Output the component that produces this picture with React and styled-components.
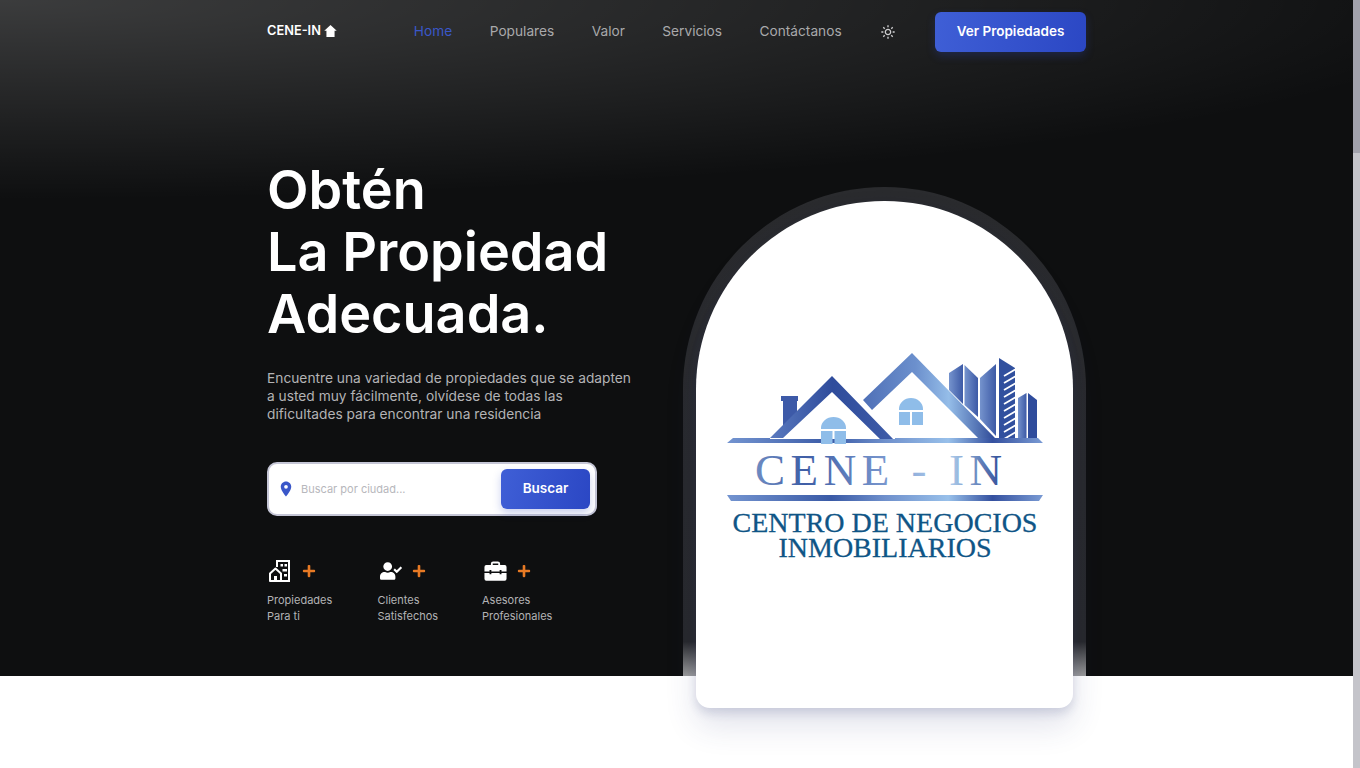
import React from 'react'
import styled, { createGlobalStyle } from 'styled-components'
import { FaUserCheck, FaPlus } from 'react-icons/fa'
import { BiSun } from 'react-icons/bi'
import { MdLocationOn } from 'react-icons/md'

const GlobalStyle = createGlobalStyle`
    body {
        margin: 0;
        background: #fff;
        font-family: 'Inter', 'Open Sans', sans-serif;
    }
`;

const Page = styled.div`
    height: 768px;
    display: flex;
    overflow: hidden;
`;

const Main = styled.main`
    flex: 1;
`;

const ScrollTrack = styled.div`
    width: 7px;
    background: #c4c4ca;
`;

const ScrollThumb = styled.div`
    height: 153px;
    background: #a2a2ac;
`;

const Hero = styled.section`
    height: 676px;
    background: radial-gradient(ellipse 1500px 200px at 0 0, rgba(255, 255, 255, 0.19), transparent), #0e0f10;
`;

const Wrapper = styled.div`
    width: 819px;
    margin: 0 auto;
`;

const Nav = styled.nav`
    height: 63px;
    display: flex;
    align-items: center;
    justify-content: space-between;
`;

const Logo = styled.a`
    display: flex;
    align-items: center;
    gap: 3px;
    padding-bottom: 2px;
    color: #fff;
    font-size: 12.8px;
    font-weight: 600;
`;

const Menu = styled.div`
    display: flex;
    align-items: center;
    gap: 37.5px;
    margin-left: 77px;
    padding-bottom: 2px;
`;

const MenuLink = styled.a`
    font-size: 13.7px;
    color: ${props => props.active ? '#3a57c9' : '#a9a9ab'};
`;

const ThemeIcon = styled.span`
    display: flex;
    color: #d0d0d2;
    font-size: 16px;
    margin: 0 39px 0 auto;
`;

const Button = styled.button`
    border: 0;
    border-radius: 6px;
    padding: 0 0 2px;
    color: #fff;
    font-family: inherit;
    font-size: 13.5px;
    font-weight: 600;
    background: linear-gradient(101deg, #3f5fd6, #2b47c4);
    box-shadow: 0 4px 8px rgba(44, 70, 190, 0.25);
    width: ${props => props.wide ? '151px' : '89px'};
    height: 40px;
`;

const Content = styled.div`
    display: flex;
    justify-content: space-between;
`;

const Left = styled.div`
    padding-top: 96px;
`;

const Title = styled.h1`
    margin: 0 0 24px;
    color: #fff;
    font-size: 54px;
    line-height: 62px;
    font-weight: 600;
`;

const Description = styled.p`
    margin: 0 0 39px;
    width: 370px;
    color: #b3b3b5;
    font-size: 13.75px;
    line-height: 18px;
`;

const Search = styled.form`
    width: 330px;
    height: 54px;
    box-sizing: border-box;
    display: flex;
    align-items: center;
    padding: 0 5px 0 8px;
    gap: 6px;
    background: #fff;
    border: 2px solid #c5c6d6;
    border-radius: 10px;
    margin-bottom: 41px;
`;

const PinIcon = styled.span`
    display: flex;
    color: #3a57c9;
    font-size: 18px;
`;

const Placeholder = styled.span`
    flex: 1;
    color: #b7b7bc;
    font-size: 11px;
`;

const Stats = styled.div`
    display: flex;
`;

const Stat = styled.div`
    width: ${props => props.width}px;
`;

const StatTop = styled.div`
    display: flex;
    align-items: center;
    gap: 10px;
    height: 28px;
    margin-bottom: 7px;
    color: #fff;
`;

const StatIcon = styled.span`
    display: flex;
    margin-left: ${props => props.offset}px;
`;

const Plus = styled.span`
    display: flex;
    color: #e87a24;
    font-size: 14px;
`;

const StatLabel = styled.div`
    color: #b3b3b5;
    font-size: 11px;
    line-height: 16px;
`;

const Orbe = styled.div`
    margin-top: 124px;
    width: 403px;
    height: 489px;
    box-sizing: border-box;
    padding: 14px 13px 0;
    border-radius: 202px 202px 0 0;
    background: linear-gradient(180deg, #2a2b2e 0%, #27282b 93%, #9a9a9a 100%);
`;

const Card = styled.div`
    height: 507px;
    background: #fff;
    border-radius: 188px 188px 14px 14px;
    box-shadow: 0 18px 32px rgba(50, 60, 120, 0.14), 0 5px 10px rgba(50, 60, 120, 0.16);
    display: flex;
    justify-content: center;
    padding-top: 139px;
    box-sizing: border-box;
`;

const LogoArt = styled.svg`
    display: block;
    width: 331px;
    height: 230px;
`;

function HomeIcon() {
    return (
        <svg width="13" height="14" viewBox="0 0 24 24" fill="#fff">
            <path d="M12 1L0.500 11.500H4.500V23H19.500V11.500H23.500z" />
        </svg>
    )
}

function BuildingIcon() {
    return (
        <svg width="24" height="24" viewBox="0 0 24 24" fill="none" stroke="#fff" strokeWidth="2">
            <path d="M9 8V2h12v20H10" />
            <path d="M2 14.500L7.500 9.500 13 14.500V22H2z" strokeLinejoin="round" />
            <path fill="#fff" stroke="none" d="M12.500 5h2.500v2.500h-2.500zM16.500 5H19v2.500h-2.500zM14.500 10H19v2.500h-4.500zM16 15h3v2.500h-3zM6 17h3v5H6z" />
        </svg>
    )
}

function ToolboxIcon() {
    return (
        <svg width="23" height="23" viewBox="0 0 25 24" fill="#fff">
            <path fillRule="evenodd" d="M7.500 5V3.500A2.500 2.500 0 0 1 10 1h5a2.500 2.500 0 0 1 2.500 2.500V5H15.500V3.200h-6V5zM2.500 5h20A2 2 0 0 1 24.500 7v5H19v-1.500h-2V12H8v-1.500H6V12H.5V7a2 2 0 0 1 2-2zM.5 13.500H6v1.500h2V13.500h9v1.500h2V13.500h5.500V20a2 2 0 0 1-2 2h-20a2 2 0 0 1-2-2z" />
        </svg>
    )
}

// drawn in page coordinates so it can be read straight off the reference
function CeneLogo() {
    return (
        <LogoArt viewBox="719 340 331 230">
            <defs>
                <linearGradient id="roofLeft" gradientUnits="userSpaceOnUse" x1="770" y1="0" x2="895" y2="0">
                    <stop offset="0" stopColor="#5a7abf" />
                    <stop offset="0.5" stopColor="#2f4c9c" />
                    <stop offset="1" stopColor="#3e5ca8" />
                </linearGradient>
                <linearGradient id="roofRight" gradientUnits="userSpaceOnUse" x1="863" y1="0" x2="995" y2="0">
                    <stop offset="0" stopColor="#4f70b7" />
                    <stop offset="0.4" stopColor="#6c90cd" />
                    <stop offset="0.65" stopColor="#95bde8" />
                    <stop offset="1" stopColor="#2d4896" />
                </linearGradient>
                <linearGradient id="base" gradientUnits="userSpaceOnUse" x1="727" y1="0" x2="1043" y2="0">
                    <stop offset="0" stopColor="#7394d0" />
                    <stop offset="0.33" stopColor="#3a5aa6" />
                    <stop offset="0.5" stopColor="#6f90cc" />
                    <stop offset="0.7" stopColor="#98c0ea" />
                    <stop offset="0.84" stopColor="#34509f" />
                    <stop offset="1" stopColor="#7a9bd4" />
                </linearGradient>
                <linearGradient id="tower" x1="0" y1="0" x2="1" y2="0">
                    <stop offset="0" stopColor="#7593cd" />
                    <stop offset="1" stopColor="#3d5aa6" />
                </linearGradient>
                <linearGradient id="name" gradientUnits="userSpaceOnUse" x1="755" y1="0" x2="1002" y2="0">
                    <stop offset="0" stopColor="#6f8cc2" />
                    <stop offset="0.2" stopColor="#3f5ea6" />
                    <stop offset="0.55" stopColor="#7c9ad0" />
                    <stop offset="0.78" stopColor="#b3d2ef" />
                    <stop offset="1" stopColor="#2f4c97" />
                </linearGradient>
            </defs>
            {/* towers */}
            <path fill="url(#tower)" d="M949 373L963 364V404L949 390z" />
            <path fill="url(#tower)" d="M964.500 365L978 378V417L964.500 405z" />
            <path fill="url(#tower)" d="M980 378L996 364V436L980 419z" />
            <path fill="#31509e" d="M999 358L1015 368V438H999z" />
            <path stroke="#fff" strokeWidth="1.800" d="M1004 376L1016 369M1004 383L1016 376M1004 390L1016 383M1004 397L1016 390M1004 404L1016 397M1004 411L1016 404M1004 418L1016 411M1004 425L1016 418M1004 432L1016 425M1004 439L1016 432" />
            <path fill="url(#tower)" d="M1018 398L1026.500 393V438H1018z" />
            <path fill="#2f4c9c" d="M1028 393L1037 400V438H1028z" />
            {/* chimney */}
            <path fill="#3d5aa8" d="M781 396H798V401H797V414L783 428V401H781z" />
            {/* houses */}
            <path fill="url(#roofRight)" d="M863 400L912 353 995 438H978L912 372 872 410z" />
            <path fill="url(#roofLeft)" d="M770 438L832 376 895 441H882L832 392 783 438z" />
            <path fill="url(#base)" d="M727 443L733 438H770V439H895V438H1038L1043 443z" />
            {/* windows */}
            <path fill="#8fbde9" d="M821 428A12.500 11 0 0 1 846 428V429H821zM821 431H832.500V444H821zM834.500 431H846V444H834.500zM899 409A12 11 0 0 1 923 409V410H899zM899 412H910V425H899zM912 412H923V425H912z" />
            <text x="755" y="485" textLength="247" lengthAdjust="spacing" fontFamily="'Liberation Serif', serif" fontSize="45" fill="url(#name)">CENE - IN</text>
            <path fill="url(#base)" d="M727 495H1043L1039 501H731z" />
            <g fontFamily="'Liberation Serif', serif" fontSize="28" fill="#0f5586" stroke="#0f5586" strokeWidth="0.3" textAnchor="middle">
                <text x="885" y="532">CENTRO DE NEGOCIOS</text>
                <text x="885" y="557">INMOBILIARIOS</text>
            </g>
        </LogoArt>
    )
}

const stats = [
    { label: ['Propiedades', 'Para ti'], icon: <BuildingIcon />, width: 110.5, offset: 1 },
    { label: ['Clientes', 'Satisfechos'], icon: <FaUserCheck size={22} />, width: 104.5, offset: 2.5 },
    { label: ['Asesores', 'Profesionales'], icon: <ToolboxIcon />, width: 110, offset: 2 },
];

export default function App() {
    return (
        <Page>
            <GlobalStyle />
            <Main>
                <Hero>
                    <Wrapper>
                        <Nav>
                            <Logo>CENE-IN <HomeIcon /></Logo>
                            <Menu>
                                <MenuLink active>Home</MenuLink>
                                <MenuLink>Populares</MenuLink>
                                <MenuLink>Valor</MenuLink>
                                <MenuLink>Servicios</MenuLink>
                                <MenuLink>Contáctanos</MenuLink>
                            </Menu>
                            <ThemeIcon><BiSun /></ThemeIcon>
                            <Button wide>Ver Propiedades</Button>
                        </Nav>
                        <Content>
                            <Left>
                                <Title>Obtén<br />La Propiedad<br />Adecuada.</Title>
                                <Description>
                                    Encuentre una variedad de propiedades que se adapten a usted muy fácilmente, olvídese de todas las dificultades para encontrar una residencia
                                </Description>
                                <Search>
                                    <PinIcon><MdLocationOn /></PinIcon>
                                    <Placeholder>Buscar por ciudad...</Placeholder>
                                    <Button type="button">Buscar</Button>
                                </Search>
                                <Stats>
                                    {stats.map(stat => (
                                        <Stat key={stat.label[0]} width={stat.width}>
                                            <StatTop>
                                                <StatIcon offset={stat.offset}>{stat.icon}</StatIcon>
                                                <Plus><FaPlus /></Plus>
                                            </StatTop>
                                            <StatLabel>{stat.label[0]}<br />{stat.label[1]}</StatLabel>
                                        </Stat>
                                    ))}
                                </Stats>
                            </Left>
                            <Orbe>
                                <Card>
                                    <CeneLogo />
                                </Card>
                            </Orbe>
                        </Content>
                    </Wrapper>
                </Hero>
            </Main>
            <ScrollTrack>
                <ScrollThumb />
            </ScrollTrack>
        </Page>
    )
}
